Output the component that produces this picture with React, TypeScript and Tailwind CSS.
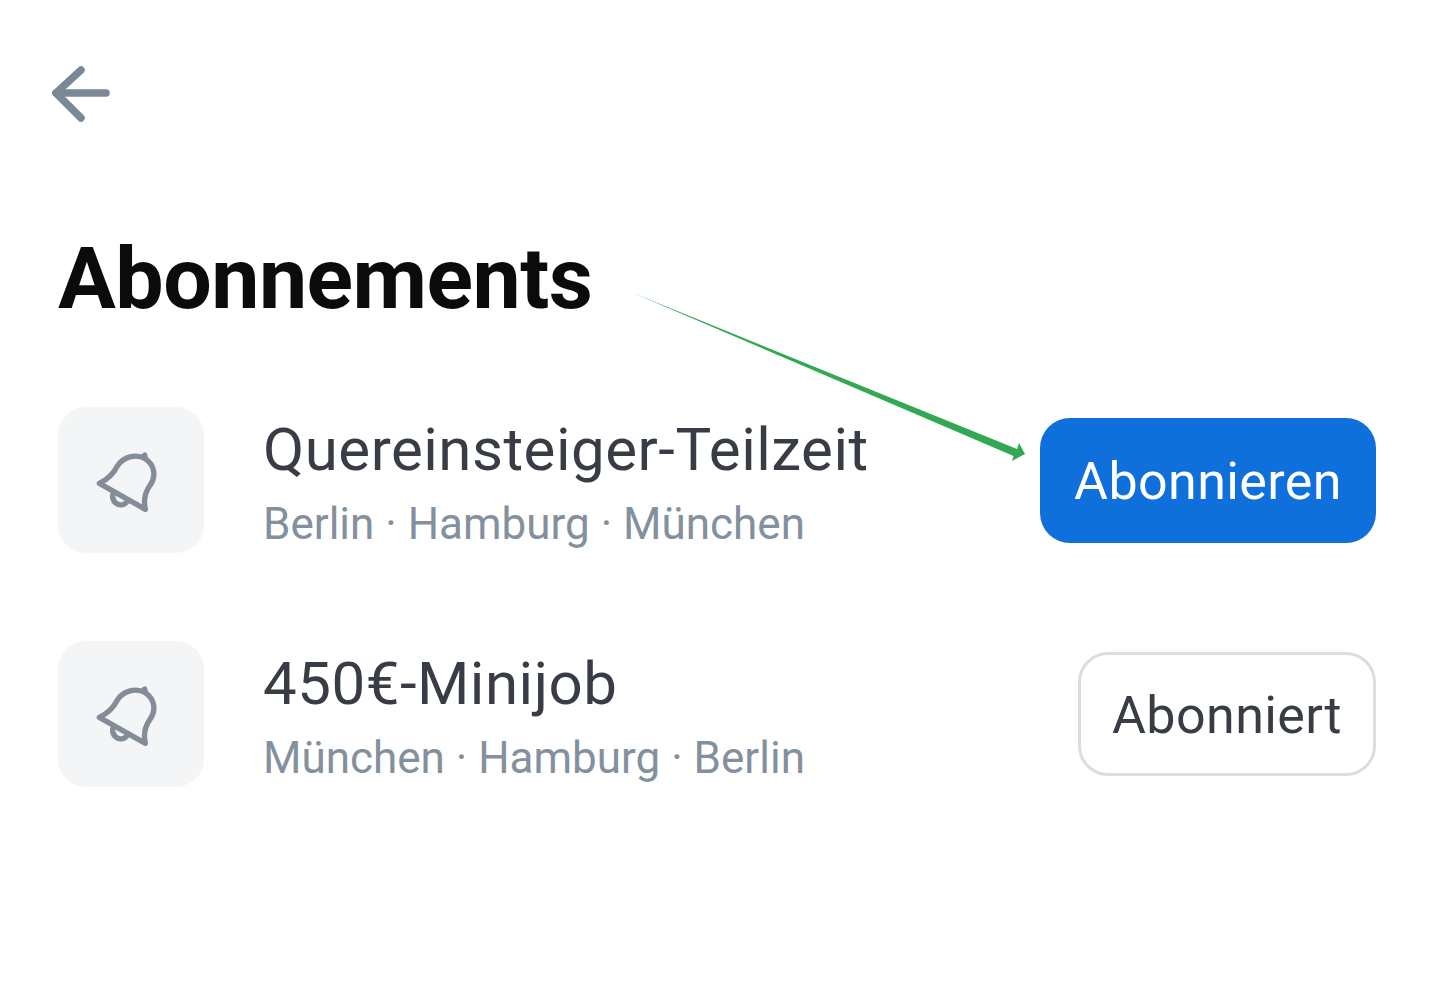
import React from 'react';

const subscriptions = [
    { title: 'Quereinsteiger-Teilzeit', cities: 'Berlin · Hamburg · München', subscribed: false },
    { title: '450€-Minijob', cities: 'München · Hamburg · Berlin', subscribed: true },
];

const BellIcon = () => (
    <svg viewBox="138 135 210 210" width="70" height="70" fill="none" stroke="#848d97" strokeWidth="16" strokeLinejoin="round" strokeLinecap="round">
        <path d="M148 250 C170 240 190 222 202 198 C220 170 258 160 286 176 C316 196 318 232 300 256 C286 276 280 302 286 328 Z" />
        <path d="M284 165 L286 174" />
        <path d="M188 285 C186 305 202 318 218 314 C226 312 230 308 233 302" />
    </svg>
);

const App = () => {
    return (
        <div className="relative h-[989px] w-[1434px] overflow-hidden bg-white px-[58px] pt-[64px] font-['Roboto',sans-serif]">
            <svg viewBox="0 0 60 60" width="60" height="60" className="-ml-[7px]" fill="none" stroke="#7a8794" strokeWidth="7.5" strokeLinecap="round" strokeLinejoin="round">
                <path d="M30 6 L5 29 L30 54" />
                <path d="M5 29 H55" />
            </svg>

            <h1 className="mt-[113px] text-[86px] font-bold leading-[84px] tracking-[-0.5px] text-[#0b0b0c]">Abonnements</h1>

            <div className="mt-[86px] flex flex-col gap-[88px]">
                {subscriptions.map((item) => (
                    <div key={item.title} className="flex items-center">
                        <div className="flex h-[146px] w-[146px] shrink-0 items-center justify-center rounded-[28px] bg-[#f4f5f6]">
                            <BellIcon />
                        </div>
                        <div className="ml-[59px] flex-1 pt-[6px]">
                            <div className="text-[60px] leading-[68px] tracking-[0.5px] text-[#383c44]">{item.title}</div>
                            <div className="mt-[14px] text-[44px] leading-[52px] text-[#83909e]">{item.cities}</div>
                        </div>
                        {item.subscribed ? (
                            <button className="flex h-[124px] w-[298px] items-center justify-center rounded-[30px] border-[3px] border-[#dddddf] bg-white pt-[3px] text-[52px] tracking-[0.4px] text-[#383c44]">
                                Abonniert
                            </button>
                        ) : (
                            <button className="flex h-[125px] w-[336px] items-center justify-center rounded-[30px] bg-[#0f6fdb] pt-[4px] text-[52px] tracking-[0.4px] text-white">
                                Abonnieren
                            </button>
                        )}
                    </div>
                ))}
            </div>

            {/* green annotation arrow */}
            <svg className="pointer-events-none absolute left-0 top-0" width="1434" height="989" viewBox="0 0 1434 989">
                <path d="M633 293 L1017 449 L1019 443 L1025 454 L1012 461 L1013.5 456 Z" fill="#33a853" />
            </svg>
        </div>
    );
};

export default App;
